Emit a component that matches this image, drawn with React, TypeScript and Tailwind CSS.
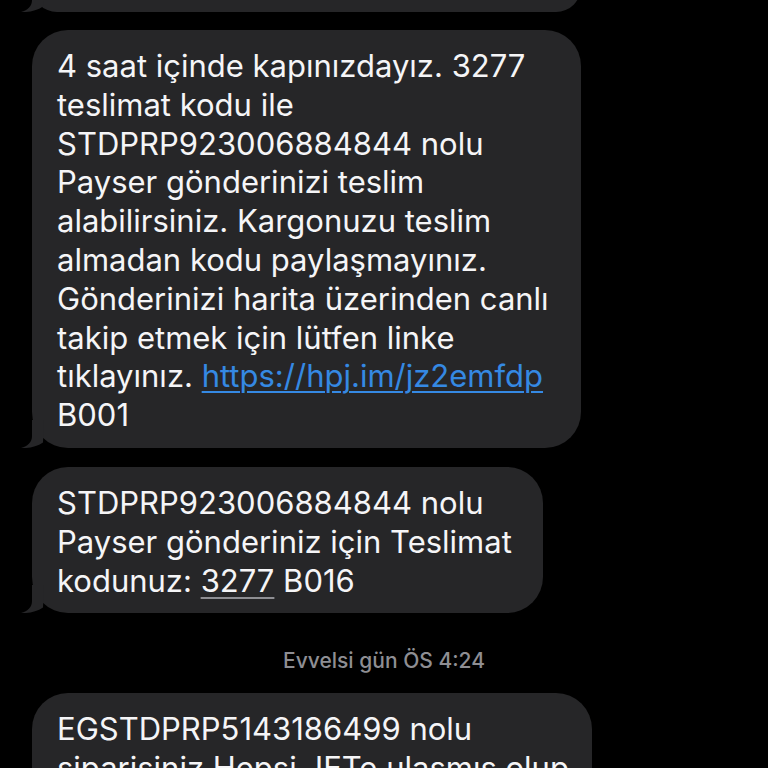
import React from "react";

const Tail = () => (
  <svg
    className="absolute left-[-12px] bottom-0 z-20"
    width="40"
    height="32"
    viewBox="0 0 40 32"
  >
    <path
      d="M12 4 L12 20 C12 26 8 30 1 32 C9 32.5 17 30.5 23 26.5 L24 4 Z"
      fill="#262628"
    />
  </svg>
);

const Bubble = ({
  lines,
  width,
  extra = "",
}: {
  lines: React.ReactNode[];
  width: string;
  extra?: string;
}) => (
  <div className={`relative ml-[32px] ${width} ${extra}`}>
    <div className="relative z-10 rounded-[36px] bg-[#262628] pl-[25px] pr-[20px] pt-[17px] pb-[13px] text-[31px] leading-[38.8px] text-[#f5f5f7]">
      {lines.map((l, i) => (
        <div key={i} className="whitespace-nowrap">
          {l}
        </div>
      ))}
    </div>
    <Tail />
  </div>
);

export default function App() {
  return (
    <div
      className="relative h-[768px] w-[768px] overflow-hidden bg-black"
      style={{ fontFamily: "Inter, 'Noto Sans', sans-serif" }}
    >
      <div className="flex flex-col">
        <div className="relative ml-[32px] mt-[-38px] w-[549px]">
          <div className="relative z-10 h-[50px] rounded-[36px] bg-[#262628]" />
          <Tail />
        </div>
        <Bubble
          width="w-[549px]"
          extra="mt-[18px]"
          lines={[
            "4 saat içinde kapınızdayız. 3277",
            "teslimat kodu ile",
            "STDPRP923006884844 nolu",
            "Payser gönderinizi teslim",
            "alabilirsiniz. Kargonuzu teslim",
            "almadan kodu paylaşmayınız.",
            "Gönderinizi harita üzerinden canlı",
            "takip etmek için lütfen linke",
            <>
              tıklayınız.{" "}
              <span className="text-[#3589e3] underline decoration-[1.5px] underline-offset-[4px]">
                https://hpj.im/jz2emfdp
              </span>
            </>,
            "B001",
          ]}
        />
        <Bubble
          width="w-[511px]"
          extra="mt-[19px]"
          lines={[
            "STDPRP923006884844 nolu",
            "Payser gönderiniz için Teslimat",
            <>
              kodunuz:{" "}
              <span className="underline decoration-[#8e8e93] decoration-[1.5px] underline-offset-[5px]">
                3277
              </span>{" "}
              B016
            </>,
          ]}
        />
        <div className="mt-[36px] text-center text-[21px] leading-[24px] font-medium text-[#8e8e93]">
          Evvelsi gün ÖS 4:24
        </div>
        <div className="ml-[32px] mt-[20px] w-[560px] rounded-[36px] bg-[#262628] pl-[25px] pr-[20px] pt-[17px] pb-[13px] text-[31px] leading-[38.8px] text-[#f5f5f7]">
          <div className="whitespace-nowrap">EGSTDPRP5143186499 nolu</div>
          <div className="whitespace-nowrap">siparişiniz Hepsi JETe ulaşmış olup</div>
          <div className="whitespace-nowrap">&nbsp;</div>
        </div>
      </div>
    </div>
  );
}
